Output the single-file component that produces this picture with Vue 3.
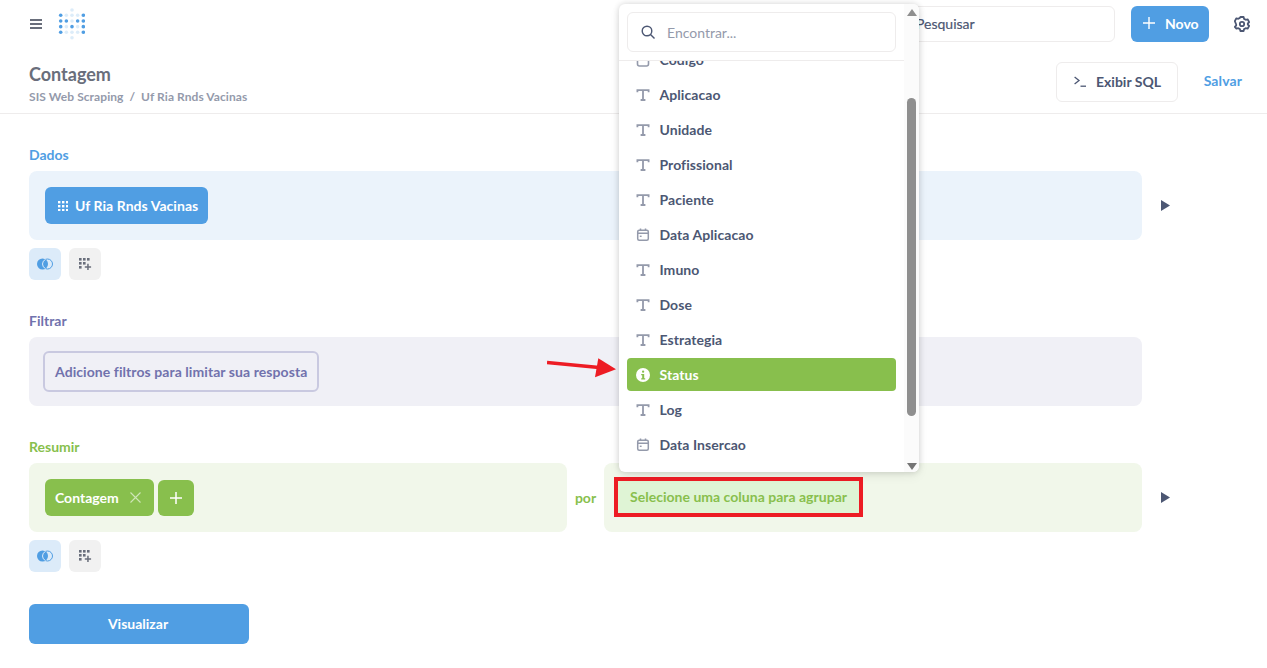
<script setup>
const rows = [
  { on: [0, 4], light: [1, 2, 3] },
  { on: [0, 1, 3, 4], light: [2] },
  { on: [0, 2, 4], light: [1, 3] },
  { on: [0, 4], light: [1, 2, 3] }
]
const dots = []
rows.forEach((r, y) => {
  r.on.forEach(x => dots.push({ x: 2.7 + x * 5.65, y: 7.3 + y * 5.67, o: 1 }))
  r.light.forEach(x => dots.push({ x: 2.7 + x * 5.65, y: 7.3 + y * 5.67, o: 0.2 }))
})
dots.push({ x: 14, y: 2, o: 0.2 }, { x: 14, y: 29.7, o: 0.2 })

const fields = [
  { name: 'Codigo', icon: 'box' },
  { name: 'Aplicacao', icon: 'text' },
  { name: 'Unidade', icon: 'text' },
  { name: 'Profissional', icon: 'text' },
  { name: 'Paciente', icon: 'text' },
  { name: 'Data Aplicacao', icon: 'date' },
  { name: 'Imuno', icon: 'text' },
  { name: 'Dose', icon: 'text' },
  { name: 'Estrategia', icon: 'text' },
  { name: 'Status', icon: 'info', active: true },
  { name: 'Log', icon: 'text' },
  { name: 'Data Insercao', icon: 'date' }
]
const gridDots = []
for (let y = 0; y < 3; y++) for (let x = 0; x < 3; x++) gridDots.push({ x: x * 4, y: y * 4 })
</script>

<template>
  <div class="page">
    <header class="topbar">
      <svg class="burger" width="12" height="10" viewBox="0 0 12 10">
        <rect y="0" width="12" height="2" fill="#696e7b" />
        <rect y="4" width="12" height="2" fill="#696e7b" />
        <rect y="8" width="12" height="2" fill="#696e7b" />
      </svg>
      <svg class="logo" width="27" height="32" viewBox="0 0 27 32">
        <circle v-for="(d, i) in dots" :key="i" :cx="d.x" :cy="d.y" r="1.8" fill="#509ee3" :fill-opacity="d.o" />
      </svg>
      <div class="search">Pesquisar</div>
      <button class="novo">
        <svg width="12" height="12" viewBox="0 0 12 12"><path d="M6 0v12M0 6h12" stroke="#fff" stroke-width="1.4" /></svg>
        <span>Novo</span>
      </button>
      <svg class="gear" width="16" height="16" viewBox="0 0 16 16" fill="none" stroke="#4c5773" stroke-width="1.8" stroke-linejoin="round">
        <path d="M6.4 1h3.2l.5 1.9 1.6.9 1.900-.5 1.600 2.800-1.400 1.400v1l1.400 1.400-1.600 2.800-1.900-.5-1.600.9-.5 1.900H6.400l-.5-1.900-1.600-.9-1.900.5L.8 10.900l1.400-1.400v-1L.8 5.100l1.600-2.800 1.900.5 1.600-.9z" />
        <circle cx="8" cy="8" r="2.200" />
      </svg>
    </header>

    <section class="titlebar">
      <div class="titles">
        <h1>Contagem</h1>
        <p>SIS Web Scraping&nbsp; /&nbsp; Uf Ria Rnds Vacinas</p>
      </div>
      <button class="sql">
        <svg width="12" height="11" viewBox="0 0 12 11" fill="none" stroke="#4c5773" stroke-width="1.300"><path d="M.6 1l4.400 3.500L.6 8" /><path d="M6.500 10.200H12" /></svg>
        <span>Exibir SQL</span>
      </button>
      <span class="salvar">Salvar</span>
    </section>

    <main class="editor">
      <div class="label blue">Dados</div>
      <div class="row">
        <div class="panel bg-blue">
          <div class="pill pill-blue">
            <svg width="10" height="10" viewBox="0 0 10 10" fill="#fff">
              <rect v-for="(g, i) in gridDots" :key="i" :x="g.x" :y="g.y" width="2.4" height="2.4" />
            </svg>
            <span>Uf Ria Rnds Vacinas</span>
          </div>
        </div>
        <svg class="play" width="9" height="11" viewBox="0 0 9 11"><path d="M0 0l9 5.500-9 5.500z" fill="#4c5773" /></svg>
      </div>
      <div class="actions">
        <div class="act act-join">
          <svg width="16" height="12" viewBox="0 0 16 12">
            <circle cx="10.500" cy="6" r="5" fill="none" stroke="#509ee3" stroke-width="1" />
            <circle cx="5.500" cy="6" r="5.500" fill="#509ee3" />
            <path d="M8.525 1.410A5 5 0 0 0 8.525 10.590" fill="none" stroke="#dcebf9" stroke-width="1" />
          </svg>
        </div>
        <div class="act act-grid">
          <svg width="13" height="13" viewBox="0 0 13 13" fill="#696e7b">
            <rect x="0" y="0" width="2.600" height="2.600" /><rect x="4" y="0" width="2.600" height="2.600" /><rect x="8" y="0" width="2.600" height="2.600" />
            <rect x="0" y="4" width="2.600" height="2.600" /><rect x="4" y="4" width="2.600" height="2.600" />
            <rect x="0" y="8" width="2.600" height="2.600" />
            <path d="M8.200 5.800h1.500v2.400h2.400v1.500H9.700v2.400H8.200V9.700H5.800V8.200h2.400z" />
          </svg>
        </div>
      </div>

      <div class="label purple gap">Filtrar</div>
      <div class="row">
        <div class="panel bg-purple">
          <div class="filter-btn">Adicione filtros para limitar sua resposta</div>
        </div>
      </div>

      <div class="label green gap">Resumir</div>
      <div class="row">
        <div class="summary">
          <div class="panel bg-green">
            <div class="pill pill-green count">
              <span>Contagem</span>
              <svg width="11" height="11" viewBox="0 0 11 11"><path d="M.5.5l10 10M10.500.5l-10 10" stroke="#fff" stroke-opacity=".6" stroke-width="1.100" /></svg>
            </div>
            <div class="pill pill-green add">
              <svg width="12" height="12" viewBox="0 0 12 12"><path d="M6 0v12M0 6h12" stroke="#fff" stroke-width="1.500" /></svg>
            </div>
          </div>
          <span class="por">por</span>
          <div class="panel bg-green">
            <div class="group-btn">Selecione uma coluna para agrupar</div>
          </div>
        </div>
        <svg class="play" width="9" height="11" viewBox="0 0 9 11"><path d="M0 0l9 5.500-9 5.500z" fill="#4c5773" /></svg>
      </div>
      <div class="actions">
        <div class="act act-join">
          <svg width="16" height="12" viewBox="0 0 16 12">
            <circle cx="10.500" cy="6" r="5" fill="none" stroke="#509ee3" stroke-width="1" />
            <circle cx="5.500" cy="6" r="5.500" fill="#509ee3" />
            <path d="M8.525 1.410A5 5 0 0 0 8.525 10.590" fill="none" stroke="#dcebf9" stroke-width="1" />
          </svg>
        </div>
        <div class="act act-grid">
          <svg width="13" height="13" viewBox="0 0 13 13" fill="#696e7b">
            <rect x="0" y="0" width="2.600" height="2.600" /><rect x="4" y="0" width="2.600" height="2.600" /><rect x="8" y="0" width="2.600" height="2.600" />
            <rect x="0" y="4" width="2.600" height="2.600" /><rect x="4" y="4" width="2.600" height="2.600" />
            <rect x="0" y="8" width="2.600" height="2.600" />
            <path d="M8.200 5.800h1.500v2.400h2.400v1.500H9.700v2.400H8.200V9.700H5.800V8.200h2.400z" />
          </svg>
        </div>
      </div>

      <button class="visualizar">Visualizar</button>
    </main>

    <aside class="popover">
      <div class="pop-main">
        <div class="pop-head">
          <div class="find">
            <svg width="14" height="14" viewBox="0 0 14 14" fill="none" stroke="#4c5773" stroke-width="1.400"><circle cx="6" cy="6" r="4.800" /><path d="M9.500 9.500L13.500 13.500" /></svg>
            <span>Encontrar...</span>
          </div>
        </div>
        <div class="pop-list">
          <ul>
            <li v-for="f in fields" :key="f.name" :class="{ active: f.active }">
              <svg class="ficon" width="14" height="14" viewBox="0 0 14 14">
                <g v-if="f.icon === 'text'" fill="none" stroke="#949aab" stroke-width="1.800">
                  <path d="M1.400 4.300V2.200h11.200v2.100" /><path d="M7 2.200V12M4.600 12h4.800" />
                </g>
                <g v-else-if="f.icon === 'date'" fill="none" stroke="#949aab" stroke-width="1.500">
                  <rect x="1.700" y="2.200" width="10.600" height="10" rx="1.500" />
                  <path d="M1.700 5.300h10.600M4.500 .4v2.600M9.500 .4v2.600" />
                  <path d="M3.800 8.300h1.800" stroke-width="1.400" />
                </g>
                <g v-else-if="f.icon === 'info'">
                  <circle cx="7" cy="7" r="7" fill="#fff" />
                  <rect x="6" y="2.500" width="2.200" height="2.200" rx="1" fill="#88bf4d" />
                  <path d="M5.200 6h3v4.200h1v1.300H5.200v-1.300h1V7.300h-1z" fill="#88bf4d" />
                </g>
                <rect v-else x="1.500" y="1" width="11" height="12" rx="2" fill="none" stroke="#949aab" stroke-width="1.600" />
              </svg>
              <span>{{ f.name }}</span>
            </li>
          </ul>
        </div>
      </div>
      <div class="scrollbar">
        <svg class="sarrow" width="10" height="7" viewBox="0 0 10 7"><path d="M5 0l5 7H0z" fill="#8f8f8f" /></svg>
        <div class="thumb"></div>
        <svg class="sarrow down" width="10" height="7" viewBox="0 0 10 7"><path d="M0 0h10L5 7z" fill="#757575" /></svg>
      </div>
    </aside>

    <svg class="red-arrow" width="72" height="24" viewBox="0 0 72 24">
      <path d="M0 4.500L52 9.500" stroke="#ed1c24" stroke-width="3.500" fill="none" />
      <path d="M51.300.3L69 11.300 48 19.300z" fill="#ed1c24" />
    </svg>
  </div>
</template>

<style scoped>
.page {
  position: relative;
  width: 1267px;
  height: 668px;
  overflow: hidden;
  background: #fff;
  font-family: Lato, "Open Sans", sans-serif;
  color: #4c5773;
  font-weight: 700;
  font-size: 14px;
}
button { font-family: inherit; font-weight: 700; cursor: pointer; }

.topbar {
  display: flex;
  align-items: center;
  height: 36px;
  padding: 6px 17px 6px 30px;
}
.burger { margin-right: 16px; }
.logo { margin-right: auto; }
.search {
  box-sizing: border-box;
  width: 240px;
  height: 36px;
  border: 1px solid #eeecec;
  border-radius: 6px;
  padding-left: 40px;
  line-height: 34px;
  font-size: 14px;
  font-weight: 400;
  -webkit-text-stroke: 0.2px #4c5773;
}
.novo {
  display: flex;
  align-items: center;
  gap: 10px;
  box-sizing: border-box;
  width: 78px;
  height: 36px;
  margin-left: 16px;
  padding: 0 0 2px 12px;
  border: 0;
  border-radius: 6px;
  background: #509ee3;
  color: #fff;
  font-size: 14px;
}
.gear { margin-left: 25px; }

.titlebar {
  display: flex;
  align-items: center;
  box-sizing: border-box;
  height: 66px;
  padding: 6px 25px 0 29px;
  border-bottom: 1px solid #eeecec;
}
.titles { margin-right: auto; margin-top: -1px; }
.titles h1 {
  margin: 0;
  font-size: 18px;
  line-height: 22px;
  font-weight: 700;
  color: #696e7b;
}
.titles p {
  margin: 4px 0 0;
  font-size: 12px;
  line-height: 15px;
  letter-spacing: 0.07px;
  color: #949aab;
}
.sql {
  display: flex;
  align-items: center;
  gap: 10px;
  box-sizing: border-box;
  width: 122px;
  height: 40px;
  margin-top: -4px;
  padding: 0 0 0 17px;
  border: 1px solid #eeecec;
  border-radius: 6px;
  background: #fff;
  color: #4c5773;
  font-size: 14px;
}
.salvar { width: 39px; margin: -6px 0 0 25px; text-align: right; color: #509ee3; letter-spacing: 0.1px; }

.editor { padding: 33px 0 0 29px; }
.label { height: 15px; line-height: 15px; margin-bottom: 9px; }
.gap { margin-top: 33px; }
.blue { color: #509ee3; }
.purple { color: #7172ad; }
.green { color: #88bf4d; }

.row { display: flex; align-items: center; }
.panel {
  box-sizing: border-box;
  display: flex;
  align-items: center;
  width: 1113px;
  height: 69px;
  padding: 0 16px;
  border-radius: 8px;
}
.bg-blue { background: #ebf3fb; }
.bg-purple { background: #f0f0f6; padding-left: 14px; }
.bg-green { background: #f1f7ea; }
.play { margin-left: 19px; }

.pill {
  display: flex;
  align-items: center;
  box-sizing: border-box;
  height: 37px;
  border-radius: 6px;
  color: #fff;
  white-space: nowrap;
}
.pill-blue { background: #509ee3; padding: 0 0 0 13px; gap: 7px; width: 163px; letter-spacing: 0.05px; }
.pill-green { background: #88bf4d; }
.count { width: 109px; padding-left: 10px; justify-content: space-between; padding-right: 13px; }
.add { width: 36px; height: 36px; margin-left: 4px; margin-top: 1px; justify-content: center; }

.actions { display: flex; gap: 8px; margin-top: 8px; }
.act {
  display: flex;
  align-items: center;
  justify-content: center;
  width: 32px;
  height: 32px;
  border-radius: 6px;
}
.act-join { background: #dcebf9; }
.act-grid { background: #f1f1f1; }

.filter-btn {
  box-sizing: border-box;
  width: 276px;
  height: 41px;
  border: 2px solid #c9c9e0;
  border-radius: 6px;
  padding-left: 10px;
  line-height: 37px;
  letter-spacing: 0.07px;
  color: #7172ad;
}

.summary { display: flex; align-items: center; width: 1113px; }
.summary .panel { width: 538px; }
.por { width: 37px; text-align: center; color: #88bf4d; }
.group-btn {
  box-sizing: border-box;
  width: 249px;
  height: 40px;
  margin-left: -6px;
  margin-top: -1px;
  padding-left: 12px;
  border: 4px solid #ed1c24;
  background: #dff4d5;
  color: #88bf4d;
  line-height: 32px;
  font-size: 14px;
  letter-spacing: 0.02px;
}

.visualizar {
  display: block;
  width: 220px;
  height: 40px;
  margin-top: 32px;
  padding: 0 2px 2px 0;
  border: 0;
  border-radius: 6px;
  background: #509ee3;
  color: #fff;
  font-size: 14px;
}

.popover {
  position: absolute;
  left: 619px;
  top: 4px;
  display: flex;
  width: 300px;
  height: 468px;
  background: #fff;
  border-radius: 6px;
  box-shadow: 0 0 6px rgba(0, 0, 0, 0.16), 0 4px 12px rgba(0, 0, 0, 0.06);
}
.pop-main { width: 285px; display: flex; flex-direction: column; }
.pop-head {
  box-sizing: border-box;
  height: 57px;
  padding: 8px 8px 0;
  border-bottom: 1px solid #eeecec;
}
.find {
  display: flex;
  align-items: center;
  gap: 12px;
  box-sizing: border-box;
  width: 269px;
  height: 40px;
  padding-left: 13px;
  border: 1px solid #eeecec;
  border-radius: 6px;
  color: #949aab;
  font-weight: 400;
}
.pop-list { flex: 1; overflow: hidden; padding: 0 8px; }
.pop-list ul { list-style: none; margin: -18px 0 0; padding: 0; width: 269px; }
.pop-list li {
  display: flex;
  align-items: center;
  gap: 9px;
  height: 33px;
  margin-bottom: 2px;
  padding-left: 9px;
  border-radius: 4px;
  box-sizing: border-box;
  letter-spacing: 0.06px;
  color: #4c5773;
}
.pop-list li span { padding-left: 0.5px; }
.pop-list li.active { background: #88bf4d; color: #fff; }
.ficon { flex: none; }

.scrollbar {
  position: relative;
  width: 15px;
  background: #fbfbfb;
  border-radius: 0 6px 6px 0;
}
.sarrow { position: absolute; left: 2.500px; top: 5px; }
.sarrow.down { top: auto; bottom: 2px; }
.thumb {
  position: absolute;
  left: 3px;
  top: 94px;
  width: 9px;
  height: 318px;
  border-radius: 5px;
  background: #8f8f8f;
}
.red-arrow { position: absolute; left: 547px; top: 358px; }
</style>
